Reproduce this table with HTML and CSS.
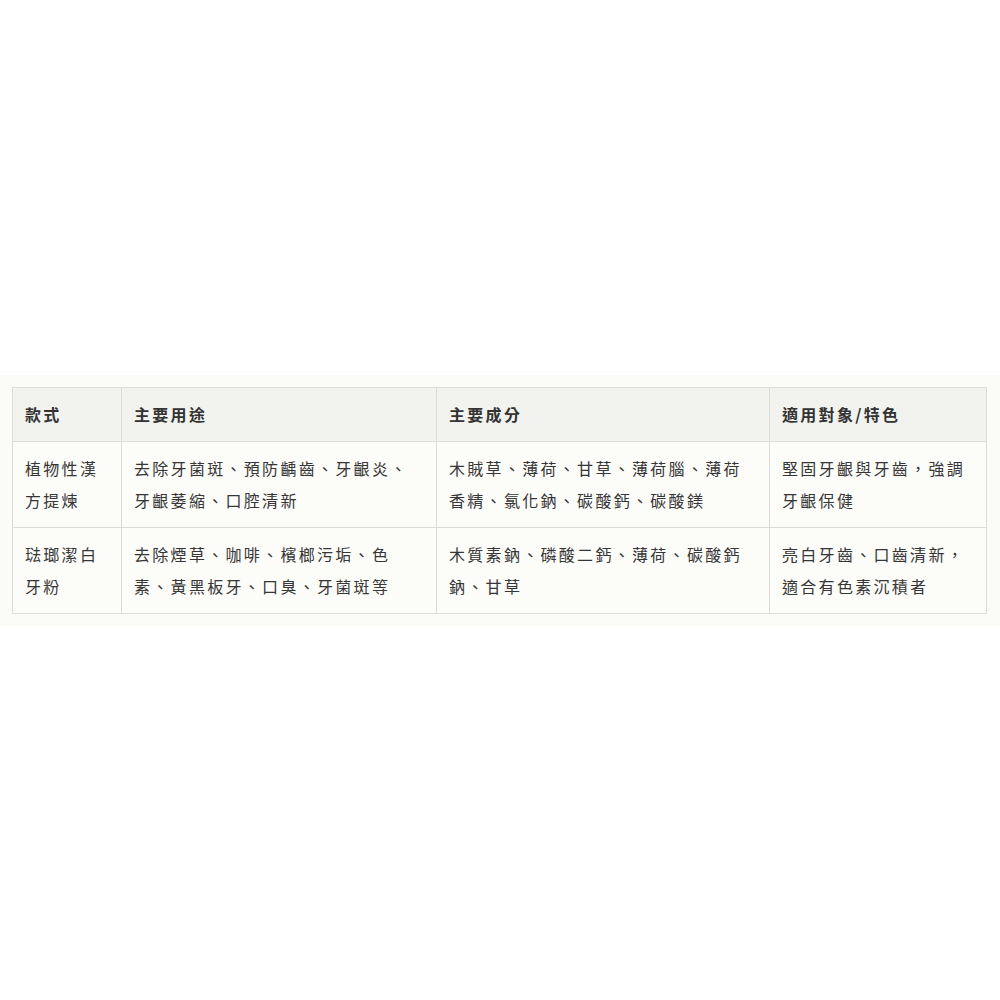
FILE: index.html
```html
<!DOCTYPE html>
<html lang="zh-Hant">
<head>
<meta charset="utf-8">
<title>牙粉比較</title>
<link rel="stylesheet" href="styles.css">
</head>
<body>
<div class="wrap">
  <table class="compare">
    <colgroup>
      <col class="c1"><col class="c2"><col class="c3"><col class="c4">
    </colgroup>
    <thead>
      <tr>
        <th>款式</th>
        <th>主要用途</th>
        <th>主要成分</th>
        <th>適用對象/特色</th>
      </tr>
    </thead>
    <tbody>
      <tr>
        <td>植物性漢方提煉</td>
        <td>去除牙菌斑、預防齲齒、牙齦炎、牙齦萎縮、口腔清新</td>
        <td>木賊草、薄荷、甘草、薄荷腦、薄荷香精、氯化鈉、碳酸鈣、碳酸鎂</td>
        <td>堅固牙齦與牙齒，強調牙齦保健</td>
      </tr>
      <tr>
        <td>琺瑯潔白牙粉</td>
        <td>去除煙草、咖啡、檳榔污垢、色素、黃黑板牙、口臭、牙菌斑等</td>
        <td>木質素鈉、磷酸二鈣、薄荷、碳酸鈣鈉、甘草</td>
        <td>亮白牙齒、口齒清新，適合有色素沉積者</td>
      </tr>
    </tbody>
  </table>
</div>
</body>
</html>
```

FILE: styles.css
```css
html, body {
  margin: 0;
  padding: 0;
  background: #ffffff;
}

.wrap {
  margin-top: 375px;
  padding: 12px 14px 12px 12px;
  background: #fbfbf8;
}

.compare {
  width: 974px;
  table-layout: fixed;
  border-collapse: collapse;
  font-family: "Noto Sans CJK TC", "Noto Sans", sans-serif;
  font-size: 16px;
  letter-spacing: 2.3px;
  color: #363636;
  background: #fcfcf9;
}

.c1 { width: 109px; }
.c2 { width: 315px; }
.c3 { width: 333px; }
.c4 { width: 217px; }

.compare th,
.compare td {
  border: 1px solid #dcdcd8;
  padding: 11px 12px;
  line-height: 31.5px;
  text-align: left;
  vertical-align: top;
  word-break: break-all;
}

.compare th {
  line-height: 31px;
  background: #f2f2ee;
  font-weight: 700;
  color: #333333;
}
```
